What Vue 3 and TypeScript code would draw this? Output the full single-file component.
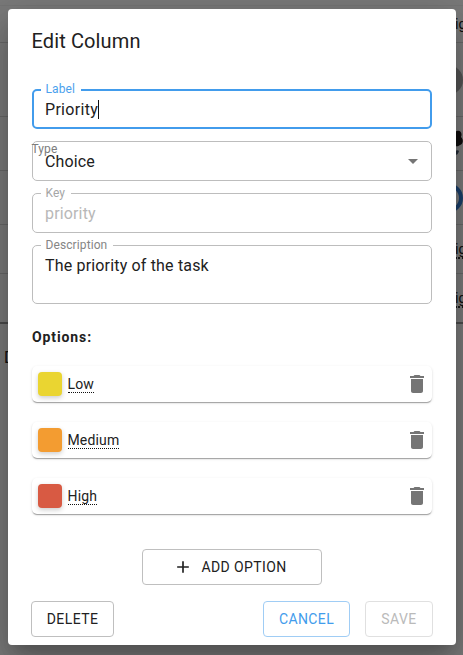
<script setup lang="ts">
import { ref } from 'vue'

interface Option {
  name: string
  tone: string
}

const label = ref('Priority')
const options = ref<Option[]>([
  { name: 'Low', tone: 'yellow' },
  { name: 'Medium', tone: 'orange' },
  { name: 'High', tone: 'red' },
])
</script>

<template>
  <div class="screen">
    <div class="board" aria-hidden="true">
      <div class="band"></div>
      <div class="row head"><span class="cell-text">ig</span></div>
      <div class="row tall"><span class="disc"></span></div>
      <div class="row mid">
        <svg class="avatar" width="14" height="34" viewBox="0 0 14 34">
          <path d="M0 5c4-3 8 0 6 5 3 3 2 7-1 8-2 2-5 1-5 1z" fill="#201a1a" />
          <path d="M0 24c2-1 3-1 4 0-1 3-2 4-4 4z" fill="#46566b" />
        </svg>
      </div>
      <div class="row mid"><span class="ring"></span></div>
      <div class="row small"><span class="cell-text dotted">ig</span></div>
      <div class="row last"><span class="cell-text dotted">ig</span></div>
      <div class="footer">D</div>
    </div>

    <div class="backdrop">
      <section class="dialog" role="dialog" aria-label="Edit Column">
        <h2 class="title">Edit Column</h2>

        <div class="fields">
          <div class="field focused">
            <span class="field-label">Label</span>
            <span class="value">{{ label }}</span><span class="caret"></span>
          </div>
          <div class="field select">
            <span class="field-label loose">Type</span>
            <span class="value">Choice</span>
            <svg class="arrow" width="24" height="24" viewBox="0 0 24 24"><path d="M7 10l5 5 5-5z" /></svg>
          </div>
          <div class="field disabled">
            <span class="field-label">Key</span>
            <span class="value">priority</span>
          </div>
          <div class="field area">
            <span class="field-label">Description</span>
            <span class="value">The priority of the task</span>
          </div>
        </div>

        <h3 class="subtitle">Options:</h3>

        <div class="options">
          <div v-for="option in options" :key="option.name" class="option">
            <span class="swatch" :class="option.tone"></span>
            <span class="option-name">{{ option.name }}</span>
            <svg class="trash" width="24" height="24" viewBox="0 0 24 24">
              <path d="M6 19c0 1.100.9 2 2 2h8c1.100 0 2-.9 2-2V7H6v12zM19 4h-3.500l-1-1h-5l-1 1H5v2h14V4z" />
            </svg>
          </div>
        </div>

        <button class="button add" type="button">
          <svg width="20" height="20" viewBox="0 0 24 24"><path d="M19 13h-6v6h-2v-6H5v-2h6V5h2v6h6v2z" /></svg>
          ADD OPTION
        </button>

        <div class="actions">
          <button class="button delete" type="button">DELETE</button>
          <button class="button cancel" type="button">CANCEL</button>
          <button class="button save" type="button" disabled>SAVE</button>
        </div>
      </section>
    </div>
  </div>
</template>

<style>
body {
  overflow: hidden;
}
</style>

<style scoped>
.screen {
  position: relative;
  width: 463px;
  height: 655px;
  overflow: hidden;
  font-family: Roboto, 'Liberation Sans', sans-serif;
  color: #212121;
}
.screen * {
  box-sizing: border-box;
}
.board {
  height: 655px;
  background: #f5f5f5;
}
.band {
  height: 6px;
  border-bottom: 1px solid #ebebeb;
}
.row {
  display: flex;
  align-items: center;
  padding-left: 455px;
  border-bottom: 1px solid #d0d0d0;
  overflow: hidden;
}
.head { height: 37px; }
.tall { height: 74px; }
.mid { height: 54px; }
.small { height: 49px; }
.last { height: 50px; border-bottom: 2px solid #999; }
.cell-text {
  font-size: 14px;
  line-height: 18px;
  letter-spacing: 0.15px;
}
.dotted { margin-top: 2px; border-bottom: 2px dotted #333; line-height: 16px; }
.disc {
  flex: none;
  width: 30px;
  height: 30px;
  margin-left: -22px;
  border-radius: 50%;
  background: #a8a8a8;
}
.avatar { flex: none; }
.ring {
  flex: none;
  width: 30px;
  height: 30px;
  margin-left: -22px;
  border: 4px solid #367fd5;
  border-radius: 50%;
}
.footer {
  padding: 23px 0 0 4px;
  font-size: 16px;
  line-height: 22px;
}
.backdrop {
  position: absolute;
  inset: 0;
  display: flex;
  padding: 9px 7px 10px 8px;
  background: rgba(0, 0, 0, 0.5);
}
.dialog {
  display: flex;
  flex-direction: column;
  width: 448px;
  height: 636px;
  padding: 16px 24px 8px;
  border-radius: 4px;
  background: #fff;
  box-shadow: 0 11px 15px -7px rgba(0, 0, 0, 0.2), 0 24px 38px 3px rgba(0, 0, 0, 0.14), 0 9px 46px 8px rgba(0, 0, 0, 0.12);
}
.title {
  margin: 0 0 0 -0.5px;
  font-size: 20px;
  line-height: 32px;
  font-weight: 400;
  letter-spacing: 0.12px;
}
.fields {
  display: flex;
  flex-direction: column;
  gap: 12px;
  margin-top: 32px;
}
.field {
  position: relative;
  display: flex;
  align-items: center;
  height: 40px;
  padding: 0 12px;
  border: 1px solid #bdbdbd;
  border-radius: 5px;
  font-size: 16px;
  letter-spacing: 0.15px;
}
.focused { border: 2px solid #429cec; padding: 0 11px; }
.value { padding-top: 2px; line-height: 24px; }
.focused .value { letter-spacing: 0.3px; }
.caret { width: 1px; height: 19px; background: #111; }
.field-label {
  position: absolute;
  top: -9px;
  left: 8px;
  padding: 0 6px 0 4.5px;
  background: #fff;
  color: #858585;
  font-size: 12px;
  line-height: 16px;
  letter-spacing: 0.1px;
}
.focused .field-label { top: -10px; left: 7px; color: #4ba1ed; }
.field-label.loose { top: -1px; left: -1.5px; padding: 0; background: none; color: #7c7c7c; }
.disabled .value { color: #b8b8b8; }
.disabled .field-label { color: #a6a6a6; }
.arrow { margin-left: auto; margin-right: -6px; fill: #757575; }
.area { height: 59px; align-items: flex-start; padding-top: 8px; }
.area .value { padding-top: 0; letter-spacing: 0.17px; }
.subtitle {
  margin: 23px 0 0;
  font-size: 14px;
  line-height: 20px;
  font-weight: 700;
  letter-spacing: 0.9px;
}
.options {
  display: flex;
  flex-direction: column;
  gap: 20px;
  margin-top: 19px;
}
.option {
  display: flex;
  align-items: center;
  height: 36px;
  padding: 0 3px 0 6px;
  border-radius: 5px;
  box-shadow: 0 2px 1px -1px rgba(0, 0, 0, 0.2), 0 1px 1px 0 rgba(0, 0, 0, 0.14), 0 1px 3px 0 rgba(0, 0, 0, 0.12);
}
.swatch {
  width: 24px;
  height: 24px;
  border-radius: 4px;
  box-shadow: 0 2px 5px rgba(0, 0, 0, 0.2);
}
.yellow { background: #ead531; }
.orange { background: #f39c31; }
.red { background: #d85a43; }
.option-name {
  margin: 0 0 0 5.5px;
  border-bottom: 1px dotted #111;
  font-size: 14px;
  line-height: 16px;
  letter-spacing: 0.15px;
}
.trash { margin-left: auto; fill: #757575; }
.button {
  display: flex;
  align-items: center;
  justify-content: center;
  height: 36px;
  padding: 0;
  border: 1px solid #bfbfbf;
  border-radius: 4px;
  background: #fff;
  color: #212121;
  font: 400 14px/24px Roboto, 'Liberation Sans', sans-serif;
  letter-spacing: 0.6px;
}
.add {
  align-self: center;
  gap: 8px;
  width: 180px;
  padding-right: 4px;
  margin-top: 35px;
  letter-spacing: 0.4px;
}
.add svg { fill: #212121; }
.actions {
  display: flex;
  margin: 16px -1px 0;
}
.delete { width: 83px; margin-right: auto; letter-spacing: 0.4px; }
.cancel { width: 87px; margin-right: 15px; border-color: #a0cdf5; color: #429cec; letter-spacing: 0.4px; }
.save { width: 68px; border-color: #e0e0e0; color: #bababa; letter-spacing: 0.4px; }
</style>
